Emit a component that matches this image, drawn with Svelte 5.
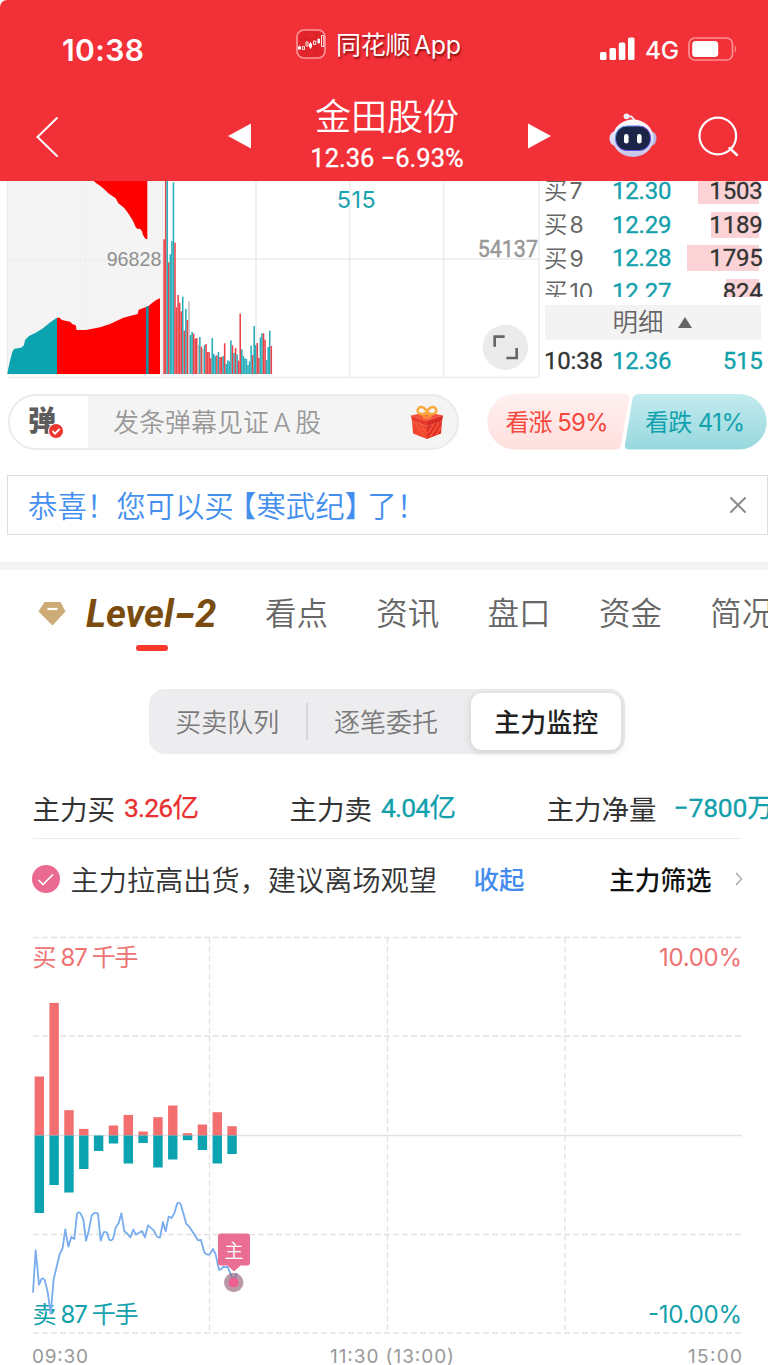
<script>
  /** 个股详情页：分时量、盘口、Level-2 主力监控 */

  const orders = [
    { name: '7', price: '12.30', vol: '1503', bar: 61 },
    { name: '8', price: '12.29', vol: '1189', bar: 48 },
    { name: '9', price: '12.28', vol: '1795', bar: 72 },
    { name: '10', price: '12.27', vol: '824', bar: 33 },
  ];

  const tabs = ['看点', '资讯', '盘口', '资金', '简况'];

  // colour letter + top of the bar, one entry per minute
  const ticks = (
    'r193 r18 t18 r262 t238 t198 t22 r203 r397 r360 r383 r409 t365 r467 t401 r435 g379 t480 t471 r476 ' +
    'r491 r489 g510 t486 r515 g522 t510 r507 r531 r531 r550 t489 t537 t543 r541 t531 r546 r546 t543 r505 ' +
    't567 t556 t559 t496 r511 t534 r519 t538 r557 r416 t523 t543 t550 t552 t570 t559 t512 r540 t453 t510 ' +
    'r504 r549 t487 t475 r475 r494 t555 t516 t467 r513'
  )
    .split(' ')
    .map((s, i) => ({ kind: s[0], top: Number(s.slice(1)), x: 490 + i * 4.66 }));

  const buys = [59, 132.6, 25.3, 6.6, 0, 10, 20.6, 4, 18.3, 30, 2.3, 11, 23.3, 9.3];
  const sells = [77.5, 49.5, 57, 33.5, 15.5, 8, 28, 7.5, 32, 24, 4.7, 14.5, 28, 18.5];
  const ZERO = 205.5;
</script>

<div class="page">
  <header class="header">
    <div class="status">
      <span class="clock">10:38</span>
      <div class="brand">
        <svg width="30" height="30" viewBox="0 0 30 30">
          <rect x="1" y="1" width="28" height="28" rx="7" fill="#e3242b" stroke="#fb9a9c" stroke-width="1.6" />
          <path d="M10 2v26M20 2v26M2 10h26" stroke="#cf1f27" stroke-width=".6" />
          <path d="M2 17.500h3v3H2zM13 14.500h3v4h-3zM21.500 10h2.500v4h-2.500z" fill="#fff" />
          <path
            d="M6.500 17.500h2v3h-2zM10 13h2v4h-2zM17.500 12h2.300v3.500h-2.300zM25.500 6.500h2.300v11h-2.300z"
            fill="none"
            stroke="#fff"
            stroke-width=".9"
          />
          <path d="M3.500 16.500v1M14.500 13v7M22.800 9v6" stroke="#fff" stroke-width=".8" />
        </svg>
        <span>同花顺 App</span>
      </div>
      <div class="signal">
        <svg width="35" height="24" viewBox="0 0 35 24">
          <g fill="#fff">
            <rect x="0" y="15" width="6.500" height="8" rx="1.500" />
            <rect x="9.500" y="11" width="6.500" height="12" rx="1.500" />
            <rect x="18.800" y="5.500" width="6.500" height="17.500" rx="1.500" />
            <rect x="28" y="0.500" width="6.500" height="22.500" rx="1.500" />
          </g>
        </svg>
        <span class="net">4G</span>
        <svg width="50" height="24" viewBox="0 0 50 24">
          <rect x="1" y="1" width="43.500" height="22" rx="6" fill="none" stroke="#fa9093" stroke-width="1.700" />
          <rect x="4.200" y="4" width="26" height="16" rx="3.500" fill="#fff" />
          <path d="M46.800 8.500q3 3.500 0 7z" fill="#fa9093" />
        </svg>
      </div>
    </div>

    <div class="nav">
      <svg class="back" width="24" height="42" viewBox="0 0 24 42">
        <path d="M22 2 2.500 21 22 40" fill="none" stroke="#fff" stroke-width="2" stroke-linecap="round" />
      </svg>
      <svg class="prev" width="23" height="26" viewBox="0 0 23 26"><path d="M0 13 23 .5v25z" fill="#fff" /></svg>
      <div class="title">
        <h1>金田股份</h1>
        <p class="num">12.36 −6.93%</p>
      </div>
      <svg class="next" width="23" height="26" viewBox="0 0 23 26"><path d="M23 13 0 .5v25z" fill="#fff" /></svg>
      <svg class="robot" width="48" height="45" viewBox="0 0 48 45">
        <defs>
          <linearGradient id="shell" x1="0" y1="0" x2="0" y2="1">
            <stop offset="0" stop-color="#fff" />
            <stop offset="1" stop-color="#c4c3e8" />
          </linearGradient>
          <linearGradient id="rim" x1="0" y1="0" x2="1" y2="1">
            <stop offset="0" stop-color="#49b6f0" />
            <stop offset=".5" stop-color="#8a4af0" />
            <stop offset="1" stop-color="#3c50d8" />
          </linearGradient>
        </defs>
        <path d="M17.500 3.500Q24 2 25.500 8" fill="none" stroke="#e9e9f8" stroke-width="2" />
        <circle cx="17.500" cy="3.300" r="2.900" fill="#f1f1fb" />
        <ellipse cx="5.500" cy="25.500" rx="5" ry="7" fill="#dcdcf3" />
        <ellipse cx="42.500" cy="25.500" rx="5" ry="7" fill="#b9b8e4" />
        <ellipse cx="24" cy="25.300" rx="20.500" ry="18.700" fill="url(#shell)" />
        <rect x="6.500" y="13" width="35" height="24.500" rx="11.500" fill="#1b2548" stroke="url(#rim)" stroke-width="1" />
        <rect x="15" y="21" width="4.600" height="9.500" rx="2.300" fill="#fff" />
        <rect x="28" y="21" width="4.600" height="9.500" rx="2.300" fill="#fff" />
      </svg>
      <svg class="search" width="42" height="42" viewBox="0 0 42 42">
        <circle cx="19.800" cy="21" r="18.300" fill="none" stroke="#fff" stroke-width="2.200" />
        <path d="m31.500 33 7.500 7" stroke="#fff" stroke-width="2.400" stroke-linecap="round" />
      </svg>
    </div>
  </header>

  <section class="quote">
    <!-- three drawing units to one pixel -->
    <svg class="ticks" width="540" height="197" viewBox="0 18 1620 591">
      <rect x="22" y="18" width="466" height="582" fill="#f4f4f4" />
      <g class="grid">
        <path d="M488 18V607M768 18V607M1049 18V607M1331 18V607M1617 18V607M488 252H1617M22 607H1617M22 18V600" />
        <path d="M22 254H488M256 18V600" stroke-dasharray="6 6" />
      </g>
      <path
        class="r"
        d="M281 18 291 26 300 32 312 42 325 55 338 64 347 70 355 85 372 98 384 114 398 136 408 158 414 162 420 161 426 169 429 180 436 191 442 193V18z"
      />
      <path class="t" d="M22 597l3-17 5-22 7-28 6-9 20-3 9-7 3-16 12-12 20-10 22-13 20-17 20-14 2 0V597z" />
      <path
        class="r"
        d="M171 428h8l7 7 24 5 8 8 9 3 3 14h28l42-8 30-10 40-19 43-11 3-13 29-10 12-11 13-9 10-4V597H171z"
      />
      <rect x="438" y="394" width="8" height="203" fill="#1c8f9c" />
      <g opacity=".88">
        {#each ticks as tick}
          <rect class={tick.kind} x={tick.x} y={tick.top} width="4.700" height={597 - tick.top} />
        {/each}
      </g>
      <text x="484" y="274" text-anchor="end" class="axis" textLength="164">96828</text>
      <text x="1614" y="247" text-anchor="end" class="axis din" textLength="181" lengthAdjust="spacingAndGlyphs">54137</text>
      <text x="1010" y="99" class="now" textLength="117">515</text>
      <circle cx="1516" cy="517" r="68" fill="#ebebeb" />
      <path d="M1484 515V485H1514M1519 549H1550V519" fill="none" stroke="#666" stroke-width="8" />
    </svg>

    <div class="book">
      <div class="orders">
        {#each orders as order}
          <div class="order">
            <span class="side">买<i>{order.name}</i></span>
            <span class="price num">{order.price}</span>
            <span class="vol num">{order.vol}</span>
            <span class="depth" style:width="{order.bar}px"></span>
          </div>
        {/each}
      </div>
      <div class="detail">明细 <svg width="14" height="11" viewBox="0 0 14 11"><path d="M7 0l7 11H0z" fill="#666" /></svg></div>
      <div class="order deal">
        <span class="time num">10:38</span>
        <span class="price num">12.36</span>
        <span class="vol num">515</span>
      </div>
    </div>
  </section>

  <section class="danmu">
    <div class="input">
      <div class="switch">
        <span>弹</span>
        <svg width="16" height="16" viewBox="0 0 16 16">
          <circle cx="8" cy="8" r="7.500" fill="#ee3630" stroke="#fff" />
          <path d="m4.500 8 2.600 2.600 4.600-4.800" fill="none" stroke="#fff" stroke-width="1.800" />
        </svg>
      </div>
      <span class="hint">发条弹幕见证 A 股</span>
      <svg class="gift" width="34" height="36" viewBox="0 0 34 36">
        <path d="M1 11.500 17 8l16 3.500L17 17z" fill="#f4513c" />
        <path d="M10 9.500h4.500l2.500 2.500 3-2.500h4L20 15h-6z" fill="#ff9a40" opacity=".7" />
        <path d="M17 9.500C11 11 6 9 8 5c3-5 9 0 9 4.500zM17 9.500c6 1.500 11-.5 9-4.500-3-5-9 0-9 4.500z" fill="none" stroke="#f9a93c" stroke-width="2.500" />
        <path d="m1 11.500 16 5.500v5L2 17z" fill="#e93a2b" />
        <path d="m33 11.500-16 5.500v5l15-5z" fill="#d92a20" />
        <path d="M2 17 17 22v13L3 29.500z" fill="#f0452f" />
        <path d="M32 17 17 22v13l14-5.500z" fill="#e03124" />
        <path d="m5 19 9 13M10 20l7 10M20 33l9-14M18 29l6-9M26 31l5-8" stroke="#f86245" stroke-width="1.100" />
      </svg>
    </div>
    <svg class="votes" width="281" height="56" viewBox="0 0 281 56">
      <defs>
        <linearGradient id="up" x1="0" y1="0" x2="0" y2="1">
          <stop offset="0" stop-color="#fff0f0" />
          <stop offset="1" stop-color="#fee0de" />
        </linearGradient>
        <linearGradient id="down" x1="0" y1="0" x2="0" y2="1">
          <stop offset="0" stop-color="#c2ebef" />
          <stop offset="1" stop-color="#98d8de" />
        </linearGradient>
      </defs>
      <path d="M28 0H138q5 0 4 5l-8 46q-1 4.500-5 4.500H28A27.700 27.700 0 0 1 28 0z" fill="url(#up)" />
      <path d="M152 0H252A27.700 27.700 0 0 1 252 55.500H142q-5 0-4-5l7.500-46Q146.500 0 152 0z" fill="url(#down)" />
      <text x="18.500" y="37" fill="#f6483e" textLength="103">看涨 59%</text>
      <text x="158" y="37" fill="#12a2ae" textLength="100">看跌 41%</text>
    </svg>
  </section>

  <div class="notice">
    <p>恭喜！您可以买<span class="open">【</span>寒武纪<span class="shut">】</span>了！</p>
    <svg width="18" height="18" viewBox="0 0 18 18"><path d="M2 2l14 14M16 2 2 16" stroke="#8a8a8a" stroke-width="2" stroke-linecap="round" /></svg>
  </div>

  <div class="gap"></div>

  <nav class="tabs">
    <svg width="30" height="26" viewBox="0 0 30 26">
      <path d="M7.500 1h16L28.500 10.500 15.500 24.500 1.500 10.500z" fill="#cdab77" />
      <path d="M10.500 8h10" stroke="#fff" stroke-width="2.200" />
    </svg>
    <span class="level">Level<b>-</b>2</span>
    {#each tabs as tab}
      <span class="tab">{tab}</span>
    {/each}
  </nav>

  <div class="segment">
    <span class="item">买卖队列</span>
    <span class="line"></span>
    <span class="item second">逐笔委托</span>
    <span class="item active">主力监控</span>
  </div>

  <div class="stats">
    <span>主力买</span><b class="num up">3.26<i>亿</i></b>
    <span>主力卖</span><b class="num down">4.04<i>亿</i></b>
    <span>主力净量</span><b class="num down net-value">−7800<i>万</i></b>
  </div>

  <div class="advice">
    <svg width="28" height="28" viewBox="0 0 28 28">
      <circle cx="14" cy="14" r="14" fill="#ea6a92" />
      <path d="m6.500 15 4.500 4.500 10-10" fill="none" stroke="#fff" stroke-width="1.700" />
    </svg>
    <p>主力拉高出货，建议离场观望</p>
    <a href="#fold">收起</a>
    <span class="filter">主力筛选</span>
    <svg width="8" height="14" viewBox="0 0 8 14"><path d="m1 1 5.500 6L1 13" fill="none" stroke="#a8a8a8" stroke-width="1.400" /></svg>
  </div>

  <svg class="monitor" width="768" height="435" viewBox="0 0 768 435">
    <g class="guide">
      <path d="M33 7.500H742M33 106H742M33 304.500H742M33 403H742" stroke-dasharray="6 3" />
      <path d="M209.500 7.500V403M387.500 7.500V403M565 7.500V403" stroke-dasharray="6 3" />
      <path d="M33 205.500H742" />
    </g>
    {#each buys as up, i}
      <rect x={34.6 + i * 14.83} y={ZERO - up} width="9.400" height={up} fill="#f36e6f" />
      <rect x={34.6 + i * 14.83} y={ZERO} width="9.400" height={sells[i]} fill="#0ca3b1" />
    {/each}
    <g class="labels">
      <text x="32.500" y="36" fill="#ee7373" textLength="106">买 87 千手</text>
      <text x="742" y="36" fill="#ee7373" text-anchor="end" textLength="83">10.00%</text>
      <text x="32.500" y="393" fill="#12a0ac" textLength="106">卖 87 千手</text>
      <text x="742" y="393" fill="#12a0ac" text-anchor="end" textLength="94">-10.00%</text>
    </g>
    <path
      transform="translate(20 200) scale(.3333)"
      d="M39 488 47 361 57 464 65 446Q69 443 74 450L83 486 92 551 101 448 119 373 128 354 136 298 145 350 154 321 163 327 171 252Q177 243 182 251L190 268 198 332 206 303 215 257Q226 244 234 251L242 332 251 307Q258 303 262 310L267 328Q273 334 279 327L287 293 296 279 304 250 313 304 322 311 331 322 340 299 348 314 366 303 375 322 384 286 401 301 411 320Q416 324 420 322L429 276 437 304 446 260 455 264 463 250 472 220Q478 214 483 225L499 282 508 290 534 331 543 330 553 367Q562 377 569 373L579 357 587 373 597 419Q602 421 609 411L623 411 632 432 641 454 650 430"
      fill="none"
      stroke="#79adee"
      stroke-width="5.500"
      stroke-linejoin="round"
    />
    <circle cx="233.700" cy="352.500" r="9.700" fill="#8e5a72" opacity=".62" />
    <circle cx="233.700" cy="352.500" r="5" fill="#ee5f8e" />
    <path d="M221 303.500h26q3 0 3 3v26q0 3-3 3h-6.500l-6.500 6-6.500-6H221q-3 0-3-3v-26q0-3 3-3z" fill="#ea6e94" />
    <text x="234" y="327.500" class="pin" text-anchor="middle">主</text>
    <g class="hours">
      <text x="32" y="433" textLength="56">09:30</text>
      <text x="392" y="433" text-anchor="middle" textLength="124">11:30 (13:00)</text>
      <text x="742" y="433" text-anchor="end" textLength="54">15:00</text>
    </g>
  </svg>
</div>

<style>
  :global(body) {
    background: #fff;
  }

  .page {
    width: 768px;
    height: 1365px;
    overflow: hidden;
    color: #333;
    background: #fff;
    font-family: Inter, 'Noto Sans CJK SC', sans-serif;
    font-weight: 350;
  }

  .page svg {
    display: block;
    flex: none;
  }

  .num {
    font-family: Roboto, 'Noto Sans CJK SC', sans-serif;
    font-weight: 400;
    -webkit-text-stroke: 0.3px currentColor;
  }

  .header {
    height: 181px;
    background: #f23038;
    border-top-left-radius: 7px;
    color: #fff;
  }

  .status {
    display: flex;
    align-items: center;
    height: 90px;
    padding: 8px 30px 0 62px;
    box-sizing: border-box;
  }

  .clock {
    width: 234px;
    padding-top: 1px;
    font-size: 30px;
    font-weight: 600;
    letter-spacing: 0.4px;
  }

  .brand {
    display: flex;
    align-items: center;
    gap: 10px;
    width: 304px;
    margin-top: -8px;
    font-size: 25px;
    font-weight: 400;
    line-height: 30px;
    white-space: nowrap;
    text-shadow: 1px 2px 2px rgba(90, 0, 0, 0.7);
  }

  .brand svg {
    position: relative;
    top: -1px;
  }

  .brand span {
    word-spacing: -3px;
    letter-spacing: -0.3px;
  }

  .signal {
    display: flex;
    align-items: center;
  }

  .net {
    width: 43px;
    padding: 2px 0 0 10px;
    font-size: 24.5px;
    font-weight: 500;
    line-height: 24px;
    letter-spacing: -0.3px;
  }

  .nav {
    display: flex;
    align-items: center;
    height: 91px;
    padding-left: 35px;
  }

  .back {
    margin-top: 3px;
  }

  .prev {
    margin-left: 169px;
  }

  .title {
    width: 277px;
    padding-right: 5px;
    box-sizing: border-box;
    text-align: center;
    line-height: 1;
  }

  .title h1 {
    margin: 0 0 6px;
    font-size: 36px;
    font-weight: 350;
    line-height: 40px;
  }

  .title p {
    margin: 0 0 1px;
    font-size: 25.5px;
    line-height: 30px;
  }

  .robot {
    margin-left: 58px;
  }

  .search {
    margin-left: 41px;
  }

  .quote {
    display: flex;
    height: 197px;
  }

  .grid {
    fill: none;
    stroke: #ebebeb;
    stroke-width: 4;
  }

  .r {
    fill: #ff0000;
  }

  .t {
    fill: #0ca3b1;
  }

  .g {
    fill: #b5b5b5;
  }

  g > .r {
    fill: #ea2a30;
  }

  .axis {
    font-family: 'Liberation Sans', sans-serif;
    font-size: 59px;
    fill: #8e8e8e;
  }

  .axis.din {
    font-family: Roboto, sans-serif;
    font-size: 70px;
    font-weight: 400;
    fill: #999;
    stroke: #999;
    stroke-width: 1.5;
  }

  .now {
    font-size: 70px;
    font-weight: 400;
    fill: #18a3b0;
  }

  .book {
    width: 228px;
    font-family: Roboto, 'Noto Sans CJK SC', sans-serif;
  }

  .orders {
    height: 115.5px;
    overflow: hidden;
  }

  .order {
    position: relative;
    display: flex;
    align-items: center;
    height: 33.7px;
    padding: 0 5.5px 0 4px;
    font-size: 24px;
  }

  .orders .order:first-child {
    margin-top: -7px;
  }

  .order span {
    position: relative;
    z-index: 1;
  }

  .order .num {
    letter-spacing: -0.2px;
  }

  .side {
    width: 68px;
    margin-top: -3px;
    font-size: 23.5px;
    color: #666;
    white-space: nowrap;
  }

  .side i {
    margin-left: 2px;
    font-style: normal;
    font-family: Inter, sans-serif;
    font-size: 23px;
    font-weight: 400;
  }

  .price {
    color: #12a0ac;
  }

  .vol {
    margin-left: auto;
  }

  .order .depth {
    position: absolute;
    z-index: 0;
    right: 9px;
    top: 4px;
    height: 26px;
    background: #fbd3d6;
  }

  .detail {
    display: flex;
    align-items: center;
    justify-content: center;
    gap: 14px;
    height: 35px;
    margin: 8.5px 7px 0 5px;
    padding-right: 2px;
    background: #f3f3f3;
    color: #666;
    font-size: 25.5px;
    line-height: 35px;
  }

  .deal {
    height: 42px;
  }

  .time {
    width: 68px;
  }

  .deal .vol {
    color: #12a0ac;
  }

  .danmu {
    display: flex;
    gap: 28px;
    margin: 16px 0 0 8px;
    height: 56px;
  }

  .input {
    display: flex;
    align-items: center;
    width: 451px;
    box-sizing: border-box;
    border: 2px solid #ebebeb;
    border-radius: 28px;
    background: #f4f4f4;
    overflow: hidden;
  }

  .switch {
    position: relative;
    width: 78px;
    height: 100%;
    box-sizing: border-box;
    padding: 8px 0 0 18px;
    background: #fff;
    color: #5c5c5c;
    font-size: 28px;
    font-weight: 800;
    line-height: 34px;
  }

  .switch svg {
    position: absolute;
    left: 38px;
    top: 27px;
  }

  .hint {
    width: 297px;
    margin-top: -3px;
    padding-left: 25px;
    color: #999;
    font-size: 26px;
    word-spacing: -3px;
  }

  .gift {
    margin-top: -1px;
  }

  .votes text {
    font-size: 24px;
    font-weight: 400;
  }

  .notice {
    display: flex;
    align-items: center;
    justify-content: space-between;
    height: 60px;
    margin: 25px 0 0 7px;
    padding: 0 20px;
    box-sizing: border-box;
    border: 1.5px solid #ddd;
    color: #448fee;
    font-size: 29.4px;
  }

  .notice p {
    margin: -3px 0 0;
    white-space: nowrap;
  }

  .open,
  .shut {
    font-feature-settings: 'halt' 1;
  }

  .open {
    margin-left: 8px;
  }

  .shut {
    margin-right: 8px;
  }

  .gap {
    height: 8px;
    margin-top: 27px;
    background: #f4f4f4;
  }

  .tabs {
    display: flex;
    align-items: center;
    height: 88px;
    padding-left: 37px;
    white-space: nowrap;
  }

  .level {
    position: relative;
    flex: none;
    width: 179px;
    padding-left: 19px;
    font-family: Roboto, sans-serif;
    font-size: 38px;
    font-style: italic;
    font-weight: 700;
    line-height: 44px;
    color: #7b4c10;
  }

  .level::after {
    content: '';
    position: absolute;
    left: 69px;
    bottom: -15px;
    width: 32px;
    height: 6px;
    border-radius: 3px;
    background: #fa392d;
  }

  .level b {
    display: inline-block;
    margin: 0 2px 0 3px;
    transform: scaleX(1.5);
  }

  .tab {
    flex: none;
    width: 111.3px;
    font-size: 31.5px;
    line-height: 44px;
    color: #666;
  }

  .segment {
    display: flex;
    align-items: center;
    width: 476px;
    height: 65px;
    margin: 31px 0 0 149px;
    padding: 4px;
    box-sizing: border-box;
    border-radius: 16px;
    background: #ededf0;
    font-size: 26px;
    color: #7a7a7a;
  }

  .item {
    width: 149px;
    margin-top: -2px;
    padding-right: 4px;
    text-align: center;
  }

  .second {
    width: 157px;
    padding-right: 7px;
  }

  .item.active {
    width: 150px;
    height: 57px;
    margin: 0;
    padding: 0;
    border-radius: 11px;
    background: #fff;
    box-shadow: 0 2px 8px rgba(0, 0, 0, 0.14);
    color: #222;
    font-weight: 500;
    line-height: 60px;
  }

  .line {
    width: 2px;
    height: 37px;
    background: #d4d4d9;
  }

  .stats {
    display: flex;
    align-items: center;
    height: 60px;
    margin: 24px 26px 0 32.5px;
    border-bottom: 1.5px solid #ebebeb;
    font-size: 27.5px;
    font-weight: 400;
    white-space: nowrap;
  }

  .stats b {
    width: 165.5px;
    margin-top: -5px;
    padding-left: 9px;
    flex: none;
    font-size: 26.5px;
    letter-spacing: -0.8px;
  }

  .stats b i {
    font-style: normal;
    letter-spacing: 0;
  }

  .stats .net-value {
    width: 60px;
    padding-left: 17px;
    letter-spacing: -0.2px;
  }

  .up {
    color: #e93030;
  }

  .down {
    color: #12a0ac;
  }

  .advice {
    display: flex;
    align-items: center;
    height: 80px;
    padding: 0 25px 0 32px;
    font-size: 28.2px;
    white-space: nowrap;
  }

  .advice p {
    width: 403.5px;
    margin: -1px 0 0 10.5px;
  }

  .advice a {
    width: 136px;
    margin-top: -3px;
    color: #438cee;
    font-size: 25.5px;
    font-weight: 500;
    text-decoration: none;
  }

  .filter {
    width: 126px;
    margin-top: -2px;
    font-size: 25.6px;
    font-weight: 500;
    color: #111;
  }

  .monitor {
    margin-top: 11px;
  }

  .guide {
    fill: none;
    stroke: #e2e2e2;
    stroke-width: 1.3;
  }

  .labels text {
    font-size: 24px;
    font-weight: 400;
  }

  .pin {
    font-size: 19px;
    fill: #fff;
  }

  .hours text {
    font-size: 19px;
    font-weight: 400;
    fill: #999;
  }
</style>
